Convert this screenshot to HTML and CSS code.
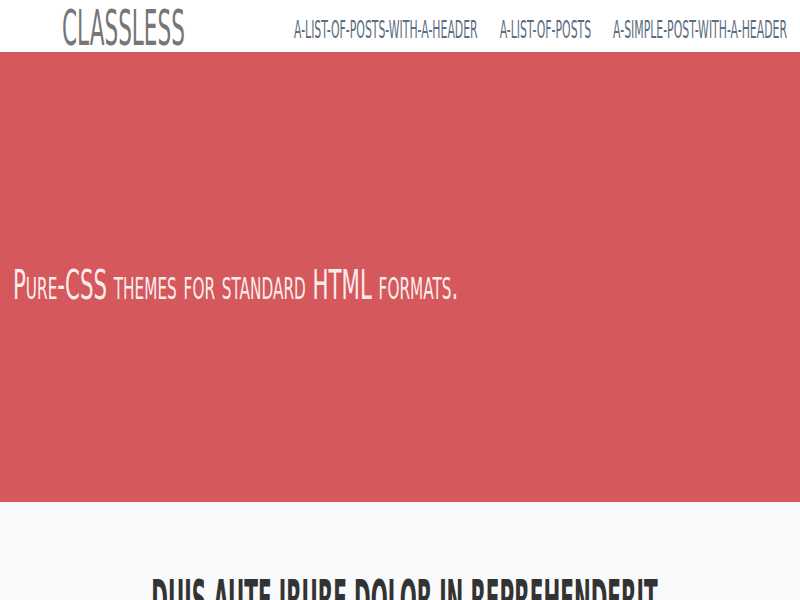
FILE: index.html
```html
<!DOCTYPE html>
<html lang="en">
<head>
<meta charset="utf-8">
<title>Classless</title>
<link rel="stylesheet" href="styles.css">
</head>
<body>
<header class="site-header">
  <a class="logo" href="#"><span class="stretch">Classless</span></a>
  <nav class="nav">
    <a href="#"><span class="stretch">a-list-of-posts-with-a-header</span></a>
    <a href="#"><span class="stretch">a-list-of-posts</span></a>
    <a href="#"><span class="stretch">a-simple-post-with-a-header</span></a>
  </nav>
</header>
<section class="hero">
  <p class="tagline"><span class="stretch">Pure-CSS themes for standard HTML formats.</span></p>
</section>
<main class="content">
  <h1 class="title"><span class="stretch">Duis aute irure dolor in reprehenderit</span></h1>
</main>
</body>
</html>
```
FILE: styles.css
```css
html, body {
  margin: 0;
  padding: 0;
}
body {
  background: #f9fafc;
  font-family: "DejaVu Sans Condensed", "DejaVu Sans", sans-serif;
  font-stretch: condensed;
  overflow: hidden;
}
a {
  text-decoration: none;
}
.stretch {
  display: inline-block;
  transform-origin: center center;
}
.site-header {
  height: 52px;
  background: #ffffff;
  display: flex;
  align-items: center;
  justify-content: space-between;
  padding: 0 13px 0 62px;
}
.logo {
  color: #767676;
  font-size: 24px;
  text-transform: uppercase;
  line-height: 1;
  padding-top: 4px;
}
.logo .stretch {
  transform: scaleY(2.1);
}
.nav {
  display: flex;
  gap: 22px;
  padding-top: 9px;
}
.nav a {
  color: #5a6d80;
  font-size: 12.1px;
  text-transform: uppercase;
  line-height: 1;
}
.nav .stretch {
  transform: scaleY(2.05);
}
.hero {
  height: 450px;
  background: #d5585c;
  display: flex;
  align-items: center;
  padding: 20px 13px 0;
  box-sizing: border-box;
}
.tagline {
  margin: 0;
  color: #fbecec;
  font-size: 23.7px;
  font-variant: small-caps;
  line-height: 1;
}
.tagline .stretch {
  transform: scaleY(1.74);
}
.content {
  text-align: center;
  padding: 86px 0 0 9px;
}
.title {
  margin: 0;
  color: #333333;
  font-size: 22.3px;
  font-weight: bold;
  text-transform: uppercase;
  line-height: 1;
}
.title .stretch {
  transform: scaleY(2.4);
}
```
